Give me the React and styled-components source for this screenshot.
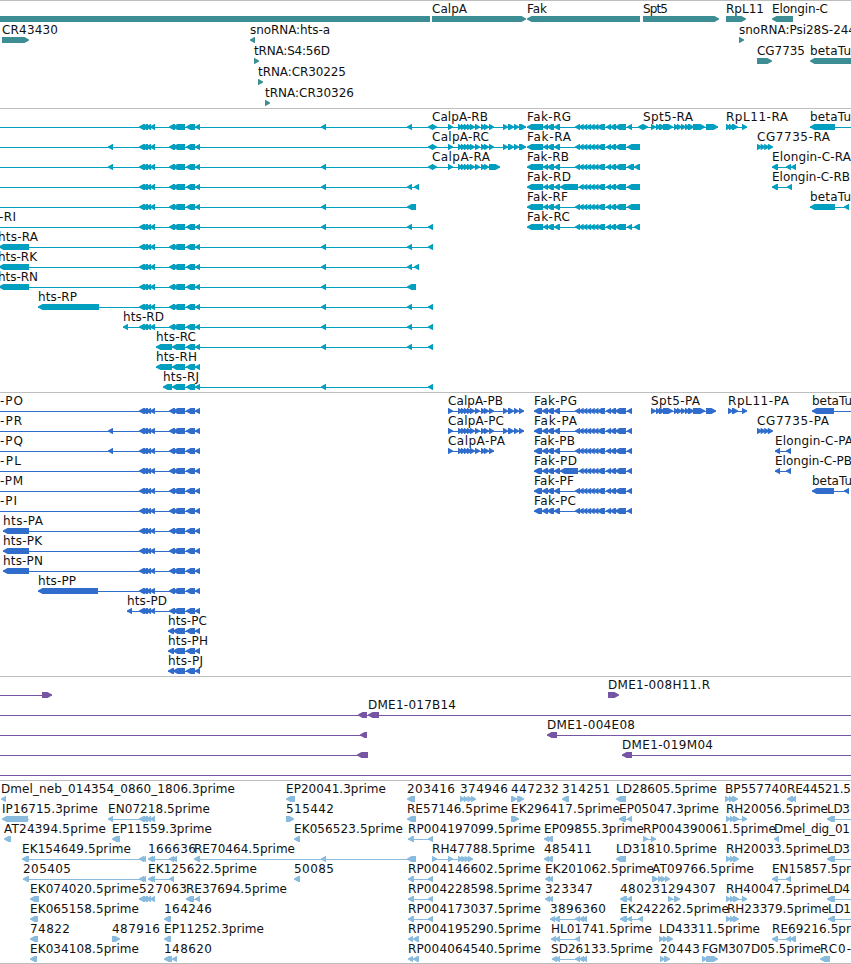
import styled, { createGlobalStyle } from "styled-components"

const GlobalStyle = createGlobalStyle`
    body{
        margin: 0;
        background: #fff;
        overflow: hidden;
    }
`;

const Browser = styled.main`
    width: 851px;
    height: 964px;
    display: flex;
    flex-direction: column;
    overflow: hidden;
    background: #fff;
`;

const Track = styled.section`
    height: ${({ $height }) => $height}px;
    flex: none;
    box-sizing: border-box;
    display: flex;
    flex-direction: column;
    border-top: 1px solid #bebebe;
    color: ${({ $color }) => $color};
`;

const Lane = styled.svg`
    display: block;
    flex: none;
    width: 851px;
    height: ${({ $pitch }) => $pitch}px;
    overflow: visible;
`;

const Label = styled.text`
    font-family: "DejaVu Sans", sans-serif;
    font-size: 12px;
    fill: #111;
`;

const Exon = styled.polygon`
    fill: currentColor;
`;

const Intron = styled.rect`
    fill: currentColor;
`;

const Footer = styled.div`
    height: 1px;
    background: #bebebe;
`;

const TOP = 15
const BOTTOM = 21

/* feature: label, label x, strand, exons, [line start, line end], label width */
const f = (label, x, strand, exons, line, width) => ({ label, x, strand, exons, line, width })

const same = (start, count, step, last) =>
    Array.from({ length: count }, (_, i) => [start + i * step, i === count - 1 ? last : start + i * step + 5])

// hts
const htsA = [[139, 145], [142, 148], [146, 151], [150, 155]]
const htsC = [[186, 195], [195, 200]]
const htsB = [[169, 175], [173, 185], ...htsC]
const hts = [...htsA, ...htsB]
const e323 = [321, 326]
const e409 = [407, 412]
const e433 = [428, 433]

// CalpA
const calpMid = [[448, 453], [458, 463], [461, 466], [464, 469], [467, 472], [470, 475], [475, 480], [481, 486], [484, 489]]
const calpTail = [[503, 508], [508, 514], [514, 519]]

// Fak
const fakDense = [...same(575, 7, 3.7, 605), [606, 611], [610, 616], [615, 626]]
const fakR = [[527, 543], [543, 548], [547, 554], [554, 560], ...fakDense]
const fakRD = [[527, 543], [543, 548], [547, 554], [554, 560], [560, 578], ...fakDense.slice(1)]
const fakP = [[534, 542], [542, 548], [547, 554], [554, 560], ...fakDense, [627, 632]]
const fakPD = [[534, 542], [542, 548], [547, 554], [554, 560], [560, 578], ...fakDense.slice(1), [627, 632]]

const spt5 = [[651, 656], [656, 661], [659, 665], [663, 673], [674, 679], [677, 682], [681, 686], [685, 690], [688, 694], [693, 705]]
const cg7735 = same(757, 4, 3.6, 773)

const genes = [
    [
        f("", 0, 0, [[-5, 430]]),
        f("CalpA", 432, 1, [[432, 526]], null, 35),
        f("Fak", 527, -1, [[527, 640]], null, 20),
        f("Spt5", 643, 1, [[643, 719]], null, 25),
        f("RpL11", 726, 1, [[726, 746]], null, 38),
        f("Elongin-C", 772, -1, [[772, 793]], null, 56),
    ],
    [
        f("CR43430", 2, 1, [[2, 29]], null, 56),
        f("snoRNA:hts-a", 250, -1, [[250, 255]], null, 80),
        f("snoRNA:Psi28S-244", 739, 1, [[739, 744]], null, 117),
    ],
    [
        f("tRNA:S4:56D", 254, 1, [[254, 259]], null, 76),
        f("CG7735", 757, 1, [[757, 772]], null, 48),
        f("betaTu", 810, -1, [[810, 870]], null, 41),
    ],
    [f("tRNA:CR30225", 258, 1, [[258, 263]], null, 88)],
    [f("tRNA:CR30326", 265, 1, [[265, 270]], null, 89)],
]

const transcripts = [
    [
        f("", 0, -1, [...hts, e323, e409, e433], [0, 433]),
        f("CalpA-RB", 432, 1, [[432, 437], ...calpMid, [489, 494], ...calpTail, [519, 526]], [432, 526], 56),
        f("Fak-RG", 527, -1, [...fakR, [627, 632], [638, 643]], [527, 643], 44),
        f("Spt5-RA", 643, 1, [[643, 648], ...spt5, [706, 718]], [643, 718], 50),
        f("RpL11-RA", 726, 1, [[726, 731], [729, 734], [732, 738], [742, 747]], [726, 747], 62),
        f("betaTu", 810, -1, [[810, 835]], [810, 851], 41),
    ],
    [
        f("", 0, -1, [[108, 113], ...hts, e433], [0, 433]),
        f("CalpA-RC", 432, 1, [[432, 437], ...calpMid, [489, 494], ...calpTail, [519, 526]], [432, 526], 57),
        f("Fak-RA", 527, -1, [...fakR, [627, 640]], [527, 640], 44),
        f("CG7735-RA", 757, 1, cg7735, null, 73),
    ],
    [
        f("", 0, -1, [[108, 113], ...hts, e323, e433], [0, 433]),
        f("CalpA-RA", 432, 1, [[432, 437], ...calpMid, [489, 500]], [432, 500], 58),
        f("Fak-RB", 527, -1, [...fakR, [627, 634], [634, 640]], [527, 640], 42),
        f("Elongin-C-RA", 772, -1, [[772, 778], [786, 791], [791, 796]], [772, 796], 79),
    ],
    [
        f("", 0, -1, [...hts, e323, e409, [414, 419]], [0, 419]),
        f("Fak-RD", 527, -1, [...fakRD, [627, 640]], [527, 640], 44),
        f("Elongin-C-RB", 772, -1, [[772, 778], [787, 792]], [772, 792], 78),
    ],
    [
        f("", 0, -1, [...hts, e323, [407, 416]], [0, 416]),
        f("Fak-RF", 527, -1, [...fakR, [627, 640]], [527, 640], 41),
        f("betaTu", 810, -1, [[810, 835], [844, 849]], [810, 849], 41),
    ],
    [
        f("-RI", -1, -1, [...hts, e323, e409, e433], [0, 433], 17),
        f("Fak-RC", 527, -1, [...fakR, [627, 632], [634, 640]], [527, 640], 43),
    ],
    [f("hts-RA", -2, -1, [[-1, 29], ...hts, e323, e409, e433], [0, 433], 40)],
    [f("hts-RK", -2, -1, [[-1, 29], ...hts, e323, e409, [414, 419]], [0, 419], 39)],
    [f("hts-RN", -2, -1, [[-1, 29], ...hts, e323, [407, 416]], [0, 416], 40)],
    [f("hts-RP", 38, -1, [[38, 99], ...hts, e323, e409, e433], [38, 433], 39)],
    [f("hts-RD", 123, -1, [[123, 128], ...hts, e323, e409, e433], [123, 433], 41)],
    [f("hts-RC", 156, -1, [[156, 172], [172, 185], ...htsC, e323, e409, e433], [156, 433], 40)],
    [f("hts-RH", 156, -1, [[156, 172], [172, 185], ...htsC], [156, 200], 41)],
    [f("hts-RJ", 163, -1, [[163, 172], [172, 185], ...htsC, e323, e433], [163, 433], 36)],
]

const calpP = [...calpMid, [489, 494], ...calpTail, [519, 524]]

const proteins = [
    [
        f("-PO", 0, -1, hts, [0, 200], 23),
        f("CalpA-PB", 448, 1, calpP, [448, 524], 55),
        f("Fak-PG", 534, -1, fakP, [534, 632], 43),
        f("Spt5-PA", 651, 1, [...spt5, [706, 716]], [651, 716], 49),
        f("RpL11-PA", 728, 1, [[728, 733], [732, 738], [742, 747]], [728, 747], 61),
        f("betaTu", 812, -1, [[812, 834]], [812, 851], 40),
    ],
    [
        f("-PR", 0, -1, [[108, 113], ...hts], [0, 200], 22),
        f("CalpA-PC", 448, 1, calpP, [448, 524], 56),
        f("Fak-PA", 534, -1, fakP, [534, 632], 43),
        f("CG7735-PA", 757, 1, cg7735, null, 72),
    ],
    [
        f("-PQ", 0, -1, [[108, 113], ...hts], [0, 200], 23),
        f("CalpA-PA", 448, 1, [...calpMid, [489, 494]], [448, 494], 57),
        f("Fak-PB", 534, -1, fakP, [534, 632], 41),
        f("Elongin-C-PA", 775, -1, [[775, 780], [786, 791]], [775, 791], 78),
    ],
    [
        f("-PL", 0, -1, hts, [0, 200], 21),
        f("Fak-PD", 534, -1, fakPD, [534, 632], 43),
        f("Elongin-C-PB", 775, -1, [[775, 780], [786, 791]], [775, 791], 77),
    ],
    [
        f("-PM", 0, -1, hts, [0, 200], 23),
        f("Fak-PF", 534, -1, fakP, [534, 632], 40),
        f("betaTu", 812, -1, [[812, 834], [844, 849]], [812, 849], 40),
    ],
    [
        f("-PI", 0, -1, hts, [0, 200], 17),
        f("Fak-PC", 534, -1, fakP, [534, 632], 42),
    ],
    [f("hts-PA", 3, -1, [[3, 29], ...hts], [3, 200], 40)],
    [f("hts-PK", 3, -1, [[3, 29], ...hts], [3, 200], 39)],
    [f("hts-PN", 3, -1, [[3, 29], ...hts], [3, 200], 40)],
    [f("hts-PP", 38, -1, [[38, 98], ...hts], [38, 200], 38)],
    [f("hts-PD", 127, -1, [[127, 132], ...hts], [127, 200], 40)],
    [f("hts-PC", 168, -1, [[168, 174], ...htsB.slice(1)], [168, 200], 39)],
    [f("hts-PH", 168, -1, [[168, 174], ...htsB.slice(1)], [168, 200], 40)],
    [f("hts-PJ", 168, -1, [[168, 174], ...htsB.slice(1)], [168, 200], 35)],
]

const clones = [
    [
        f("", 0, 1, [[42, 52]], [0, 52]),
        f("DME1-008H11.R", 608, 1, [[608, 619]], null, 102),
    ],
    [
        f("", 0, -1, [[358, 367]], [0, 367]),
        f("DME1-017B14", 368, -1, [[368, 379]], [367, 851], 88),
    ],
    [
        f("", 0, -1, [[360, 367]], [0, 367]),
        f("DME1-004E08", 547, -1, [[547, 557]], [547, 851], 88),
    ],
    [
        f("", 0, -1, [[357, 368]], [0, 367]),
        f("DME1-019M04", 622, -1, [[622, 632]], [622, 851], 91),
    ],
    [f("", 0, 0, [], [0, 851])],
]

const rp = [[408, 414], [428, 433]]
const rh = [[726, 731], [730, 735], [733, 739]]

const ests = [
    [
        f("Dmel_neb_014354_0860_1806.3prime", 1, -1, [[1, 6]], null, 234),
        f("EP20041.3prime", 286, -1, [[286, 295]], null, 100),
        f("203416", 407, -1, [[407, 415]], null, 48),
        f("374946", 460, 1, same(460, 4, 3.7, 476), null, 48),
        f("447232", 511, 1, [[511, 517], [517, 524]], null, 48),
        f("314251", 562, -1, [[562, 569]], null, 48),
        f("LD28605.5prime", 616, -1, [[616, 626]], null, 101),
        f("BP557740", 725, 1, [[725, 730], [729, 734], [732, 738]], null, 62),
        f("RE44521.5", 787, -1, [[787, 793], [791, 796]], null, 64),
    ],
    [
        f("IP16715.3prime", 2, -1, [[2, 28]], [2, 29], 96),
        f("EN07218.5prime", 108, -1, [[108, 113], ...htsA], [108, 155], 102),
        f("515442", 286, 1, [[286, 294]], null, 48),
        f("RE57146.5prime", 407, -1, [[407, 416]], null, 101),
        f("EK296417.5prime", 511, 1, [[511, 519]], null, 109),
        f("EP05047.3prime", 619, -1, [[619, 626], [627, 632]], [619, 632], 100),
        f("RH20056.5prime", 726, 1, [...rh, [742, 747]], [726, 747], 102),
        f("LD3", 827, -1, [[827, 835]], [827, 851], 23),
    ],
    [
        f("AT24394.5prime", 4, -1, [[4, 11]], null, 102),
        f("EP11559.3prime", 112, -1, [[112, 120]], null, 100),
        f("EK056523.5prime", 294, -1, [[294, 300]], null, 109),
        f("RP004197099.5prime", 408, -1, rp, [408, 433], 133),
        f("EP09855.3prime", 544, -1, [[544, 549], [547, 553]], null, 100),
        f("RP004390061.5prime", 643, 1, [[643, 648], [651, 656]], [643, 656], 133),
        f("Dmel_dig_01", 774, -1, [[774, 779]], null, 76),
    ],
    [
        f("EK154649.5prime", 22, -1, [[22, 29], [139, 144], [141, 146]], [22, 146], 109),
        f("166636", 148, -1, [[148, 153], [150, 155], [169, 174], [172, 177]], [148, 177], 48),
        f("RE70464.5prime", 194, -1, [[194, 200], e323, [407, 416]], [194, 416], 101),
        f("RH47788.5prime", 432, 1, [[432, 437], [448, 453], ...same(458, 4, 3.3, 473)], [432, 473], 103),
        f("485411", 544, -1, [[544, 549], [547, 553]], null, 48),
        f("LD31810.5prime", 616, -1, [[616, 626]], null, 101),
        f("RH20033.5prime", 726, 1, rh, null, 102),
        f("LD3", 827, -1, [[827, 835]], [827, 851], 23),
    ],
    [
        f("205405", 23, -1, [[23, 29], [139, 144], [141, 146]], [23, 146], 48),
        f("EK125622.5prime", 148, -1, [[148, 153], [150, 155], [169, 174]], [148, 174], 109),
        f("50085", 294, -1, [[294, 300]], null, 40),
        f("RP004146602.5prime", 408, -1, rp, [408, 433], 133),
        f("EK201062.5prime", 545, -1, [[545, 550], [548, 553]], null, 109),
        f("AT09766.5prime", 652, 1, [[652, 658], [658, 663], [661, 666], [665, 670]], null, 102),
        f("EN15857.5pr", 772, -1, [[772, 778], [786, 791]], [772, 791], 79),
    ],
    [
        f("EK074020.5prime", 30, -1, [[30, 39]], null, 109),
        f("527063", 139, -1, htsA, [139, 155], 48),
        f("RE37694.5prime", 186, -1, [[186, 194], [195, 200]], [186, 200], 101),
        f("RP004228598.5prime", 408, -1, rp, [408, 433], 133),
        f("323347", 545, -1, [[545, 550], [548, 553]], null, 48),
        f("480231", 620, -1, [[620, 627], [627, 632]], null, 48),
        f("294307", 668, 1, [[668, 673], [674, 680]], [668, 680], 48),
        f("RH40047.5prime", 726, 1, [...rh, [742, 747]], [726, 747], 102),
        f("LD4", 827, -1, [[827, 835]], [827, 851], 23),
    ],
    [
        f("EK065158.5prime", 30, -1, [[30, 38]], null, 109),
        f("164246", 164, -1, [[164, 171]], null, 48),
        f("RP004173037.5prime", 408, -1, rp, [408, 433], 133),
        f("3896360", 550, -1, [[550, 555], [554, 560], [575, 580], [579, 584], [582, 587]], [550, 587], 56),
        f("EK242262.5prime", 620, -1, [[620, 627], [627, 632], [638, 643]], [620, 643], 109),
        f("RH23379.5prime", 727, 1, rh, null, 102),
        f("LD1", 828, -1, [[828, 835]], [828, 851], 23),
    ],
    [
        f("74822", 30, -1, [[30, 38]], null, 40),
        f("487916", 112, 1, [[112, 120]], null, 48),
        f("EP11252.3prime", 164, -1, [[164, 171]], null, 100),
        f("RP004195290.5prime", 408, -1, [[408, 413], [413, 419]], null, 133),
        f("HL01741.5prime", 551, -1, [[551, 556], [555, 560], [575, 580]], [551, 580], 101),
        f("LD43311.5prime", 659, 1, [[659, 664], [663, 668], [667, 673]], null, 101),
        f("RE69216.5pr", 772, -1, [[772, 778], [786, 791], [790, 796]], [772, 796], 79),
    ],
    [
        f("EK034108.5prime", 30, -1, [[30, 37]], null, 109),
        f("148620", 164, -1, [[164, 172], [172, 177]], null, 48),
        f("RP004064540.5prime", 408, -1, [[408, 413], [413, 419]], null, 133),
        f("SD26133.5prime", 551, -1, [[552, 557], [555, 560], [575, 580], [579, 584], [582, 587]], [552, 587], 102),
        f("20443", 660, 1, [[660, 665], [664, 670]], null, 40),
        f("FGM307D05.5prime", 702, 1, [[702, 707], [706, 718]], null, 119),
        f("RC0-", 820, -1, [[820, 830]], null, 31),
    ],
]

const shape = ([start, end], strand) => {
    if (!strand) {
        return `${start},${TOP} ${end},${TOP} ${end},${BOTTOM} ${start},${BOTTOM}`
    }
    const tip = strand < 0 ? start : end
    const back = strand < 0 ? end : start
    const neck = tip - 4.5 * strand
    return `${tip},17.4 ${neck},${TOP} ${back},${TOP} ${back},${BOTTOM} ${neck},${BOTTOM} ${tip},18.4`
}

const Feature = ({ el }) => (
    <g>
        {el.line && <Intron x={el.line[0]} y={18} width={el.line[1] - el.line[0]} height={1} />}
        {el.exons.map((exon, i) => <Exon key={i} points={shape(exon, el.strand)} />)}
        {el.label && (
            <Label x={el.x} y={12} textLength={el.width} lengthAdjust="spacing">{el.label}</Label>
        )}
    </g>
)

const FeatureTrack = ({ lanes, color, height, pitch = 20 }) => (
    <Track $height={height} $color={color}>
        {lanes.map((lane, i) => (
            <Lane key={i} $pitch={pitch}>
                {lane.map((el, j) => <Feature key={j} el={el} />)}
            </Lane>
        ))}
    </Track>
)

const App = () => (
    <>
        <GlobalStyle />
        <Browser>
            <FeatureTrack lanes={genes} color="#3d8e94" height={108} pitch={21} />
            <FeatureTrack lanes={transcripts} color="#009fbf" height={284} />
            <FeatureTrack lanes={proteins} color="#306ccc" height={284} />
            <FeatureTrack lanes={clones} color="#7755a5" height={104} />
            <FeatureTrack lanes={ests} color="#88bbdd" height={183} />
            <Footer />
        </Browser>
    </>
)

export default App
